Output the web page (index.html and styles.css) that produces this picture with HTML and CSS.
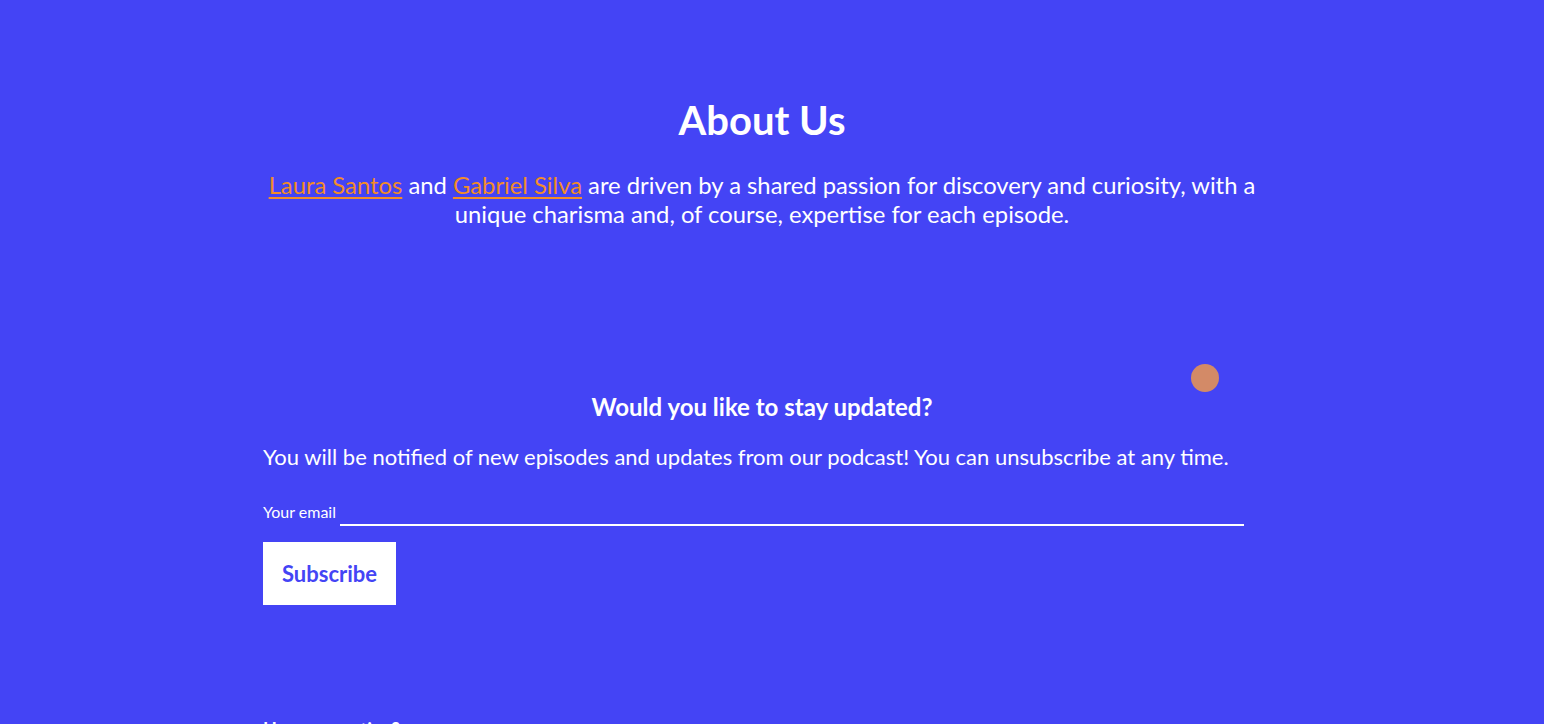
FILE: index.html
```html
<!DOCTYPE html>
<html lang="en">
<head>
<meta charset="utf-8">
<title>About Us</title>
<link rel="stylesheet" href="styles.css">
</head>
<body>
<main class="page">
  <section class="about">
    <h1 class="about-title">About Us</h1>
    <p class="about-text"><a href="#" class="host">Laura Santos</a> and <a href="#" class="host">Gabriel Silva</a> are driven by a shared passion for discovery and curiosity, with a unique charisma and, of course, expertise for each episode.</p>
  </section>
  <section class="newsletter">
    <span class="dot"></span>
    <h3 class="news-title">Would you like to stay updated?</h3>
    <p class="news-text">You will be notified of new episodes and updates from our podcast! You can unsubscribe at any time.</p>
    <form class="news-form">
      <div class="field">
        <label for="email" class="field-label">Your email</label>
        <input id="email" type="email" class="field-input">
      </div>
      <button type="button" class="btn">Subscribe</button>
    </form>
  </section>
  <section class="next">
    <h3 class="next-title">Have a question?</h3>
  </section>
</main>
</body>
</html>
```
FILE: styles.css
```css
html, body {
  margin: 0;
  padding: 0;
  background: #4444f5;
  color: #ffffff;
  font-family: Lato, "Open Sans", sans-serif;
  overflow: hidden;
}
.page {
  width: 998px;
  margin-left: 263px;
  display: flex;
  flex-direction: column;
}
.about {
  padding-top: 96px;
  text-align: center;
}
.about-title {
  margin: 0;
  font-size: 40px;
  line-height: 48px;
  font-weight: 700;
}
.about-text {
  margin: 27px 0 0;
  font-size: 23.8px;
  line-height: 29px;
}
.host {
  color: #f28c28;
  text-decoration: underline;
  text-underline-offset: 3px;
}
.newsletter {
  position: relative;
  margin-top: 164px;
  display: flex;
  flex-direction: column;
}
.dot {
  position: absolute;
  left: 928px;
  top: -29px;
  width: 28px;
  height: 28px;
  border-radius: 50%;
  background: #d38a67;
}
.news-title {
  margin: 0;
  text-align: center;
  font-size: 24px;
  line-height: 28px;
  font-weight: 700;
}
.news-text {
  margin: 21px 0 0;
  font-size: 22px;
  line-height: 29px;
}
.news-form {
  margin-top: 29px;
  display: flex;
  flex-direction: column;
  align-items: flex-start;
}
.field {
  display: flex;
  align-items: flex-end;
  width: 981px;
}
.field-label {
  font-size: 16px;
  line-height: 20px;
  padding-bottom: 4px;
}
.field-input {
  flex: 1;
  margin-left: 4px;
  height: 24px;
  background: transparent;
  border: 0;
  border-bottom: 2px solid #ffffff;
  color: #ffffff;
  font: inherit;
  outline: none;
  padding: 0;
}
.btn {
  margin-top: 16px;
  width: 133px;
  height: 63px;
  background: #ffffff;
  color: #4444f5;
  border: 0;
  font-family: inherit;
  font-size: 22px;
  font-weight: 700;
  cursor: pointer;
}
.next {
  margin-top: 112px;
}
.next-title {
  margin: 0;
  font-size: 18px;
  line-height: 24px;
  font-weight: 700;
}
```
